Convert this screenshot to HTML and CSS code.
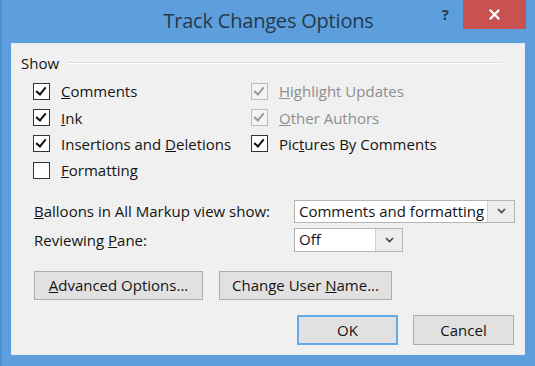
FILE: index.html
```html
<!DOCTYPE html>
<html lang="en">
<head>
  <meta charset="UTF-8">
  <title>Track Changes Options</title>
  <link rel="stylesheet" href="styles.css">
</head>
<body>
  <div class="window">
    <!-- Title bar -->
    <div class="titlebar">
      <div></div>
      <div class="title">Track Changes Options</div>
      <div class="caption-btns">
        <span class="help">?</span>
        <span class="close">
          <svg width="11" height="11" viewBox="0 0 11 11">
            <path d="M1.5 1.5 L9.5 9.5 M9.5 1.5 L1.5 9.5" stroke="#fff" stroke-width="2.2" stroke-linecap="square"/>
          </svg>
        </span>
      </div>
    </div>

    <div class="panel">
      <!-- Show group -->
      <div class="group-head">
        <span>Show</span>
        <span class="group-line"></span>
      </div>

      <div class="options">
        <label class="opt"><span class="box checked"></span><span><u>C</u>omments</span></label>
        <label class="opt disabled"><span class="box checked"></span><span><u>H</u>ighlight Updates</span></label>
        <label class="opt"><span class="box checked"></span><span><u>I</u>nk</span></label>
        <label class="opt disabled"><span class="box checked"></span><span><u>O</u>ther Authors</span></label>
        <label class="opt"><span class="box checked"></span><span>Insertions and <u>D</u>eletions</span></label>
        <label class="opt"><span class="box checked"></span><span>Pic<u>t</u>ures By Comments</span></label>
        <label class="opt"><span class="box"></span><span><u>F</u>ormatting</span></label>
      </div>

      <!-- Dropdowns -->
      <div class="form">
        <span class="form-label"><u>B</u>alloons in All Markup view show:</span>
        <div class="combo wide">
          <span class="combo-value">Comments and formatting</span>
          <span class="combo-arrow"><svg width="9" height="6" viewBox="0 0 9 6"><path d="M1 1 L4.5 4.5 L8 1" fill="none" stroke="#444" stroke-width="1.6"/></svg></span>
        </div>
        <span class="form-label">Reviewing <u>P</u>ane:</span>
        <div class="combo narrow">
          <span class="combo-value">Off</span>
          <span class="combo-arrow"><svg width="9" height="6" viewBox="0 0 9 6"><path d="M1 1 L4.5 4.5 L8 1" fill="none" stroke="#444" stroke-width="1.6"/></svg></span>
        </div>
      </div>

      <div class="btn-row">
        <button class="btn advanced"><u>A</u>dvanced Options...</button>
        <button class="btn username">Change User <u>N</u>ame...</button>
      </div>

      <div class="btn-row end">
        <button class="btn dialog default">OK</button>
        <button class="btn dialog">Cancel</button>
      </div>
    </div>
  </div>
</body>
</html>
```

FILE: styles.css
```css
body {
  margin: 0;
  font-family: "Open Sans", "Noto Sans", sans-serif;
  font-size: 15px;
  color: #141414;
}

.window {
  width: 535px;
  height: 366px;
  background-color: #5c9fdc;
  display: flex;
  flex-direction: column;
  box-sizing: border-box;
  border-left: 2px solid #4d8fcf;
}

.titlebar {
  height: 43px;
  display: grid;
  grid-template-columns: 1fr auto 1fr;
}

.title {
  font-size: 20px;
  color: #25394d;
  line-height: 42px;
  letter-spacing: -0.2px;
}

.caption-btns {
  display: flex;
  justify-content: flex-end;
  align-items: flex-start;
  padding-right: 9px;
}

.help {
  font-weight: bold;
  font-size: 15px;
  color: #25394d;
  margin-top: 4px;
  margin-right: 14px;
}

.close {
  width: 63px;
  height: 29px;
  background-color: #c9514f;
  display: flex;
  align-items: center;
  justify-content: center;
}

.panel {
  flex: 1;
  margin: 0 10px 11px 9px;
  background-color: #f0f0f0;
  border: 1px solid #e6ecf2;
  padding: 8px 9px 0 9px;
}

.group-head {
  height: 22px;
  display: flex;
  align-items: center;
}

.group-line {
  flex: 1;
  height: 1px;
  background-color: #dcdcdc;
  border-bottom: 1px solid #fff;
  margin: 0 12px 0 9px;
}

.options {
  display: grid;
  grid-template-columns: 218px 1fr;
  grid-auto-rows: 26.4px;
  padding-left: 12px;
  margin-top: 4px;
}

.opt {
  display: flex;
  align-items: center;
  gap: 11px;
}

.box {
  width: 15px;
  height: 15px;
  border: 1px solid #333;
  background-color: #fff;
  position: relative;
}

.box.checked::after {
  content: "";
  position: absolute;
  left: 4px;
  top: 1px;
  width: 4px;
  height: 8px;
  border: solid #111;
  border-width: 0 2.5px 2.5px 0;
  transform: rotate(40deg);
}

.opt.disabled {
  color: #8e8e8e;
}

.opt.disabled .box {
  border-color: #bcbcbc;
  background-color: #f4f4f4;
}

.opt.disabled .box.checked::after {
  border-color: #9a9a9a;
}

.form {
  display: grid;
  grid-template-columns: 260px auto;
  row-gap: 5px;
  padding-left: 13px;
  margin-top: 16px;
  align-items: center;
}

.combo {
  display: flex;
  background-color: #fff;
  border: 1px solid #b4b4b4;
  box-sizing: border-box;
}

.combo.wide {
  width: 221px;
  height: 23px;
}

.combo.narrow {
  width: 109px;
  height: 24px;
}

.combo-value {
  flex: 1;
  padding-left: 4px;
  line-height: 21px;
  white-space: nowrap;
  overflow: hidden;
}

.combo-arrow {
  width: 26px;
  background-color: #ededed;
  border-left: 1px solid #d2d2d2;
  display: flex;
  align-items: center;
  justify-content: center;
}

.btn-row {
  display: flex;
  gap: 16px;
  padding-left: 13px;
  margin-top: 19px;
}

.btn-row.end {
  justify-content: flex-end;
  gap: 15px;
  margin-top: 15px;
  padding-right: 1px;
}

.btn {
  font-family: inherit;
  font-size: 15px;
  color: #141414;
  background-color: #e1e1e1;
  border: 1px solid #adadad;
  height: 29px;
  padding: 0;
}

.btn.advanced {
  width: 169px;
}

.btn.username {
  width: 173px;
}

.btn.dialog {
  width: 101px;
  height: 30px;
}

.btn.default {
  border: 2px solid #63aaea;
}
```
